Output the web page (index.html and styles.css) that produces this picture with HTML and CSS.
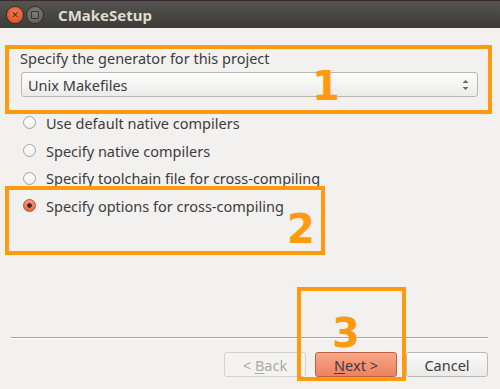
FILE: index.html
```html
<!DOCTYPE html>
<html lang="en">
<head>
  <meta charset="utf-8">
  <title>CMakeSetup</title>
  <link rel="stylesheet" href="styles.css">
</head>
<body>
  <div class="window">
    <header class="titlebar">
      <span class="btn-close">&#x2715;</span>
      <span class="btn-min"></span>
      <span class="title">CMakeSetup</span>
    </header>

    <main class="content">
      <label class="gen-label">Specify the generator for this project</label>
      <div class="combo">
        <span>Unix Makefiles</span>
        <span class="arrows">
          <svg width="7" height="12" viewBox="0 0 7 12"><path d="M0.5 4 L3.5 1 L6.5 4 Z M0.5 8 L3.5 11 L6.5 8 Z" fill="#6a6a6a"/></svg>
        </span>
      </div>

      <ul class="options">
        <li><span class="radio"></span>Use default native compilers</li>
        <li><span class="radio"></span>Specify native compilers</li>
        <li><span class="radio"></span>Specify toolchain file for cross-compiling</li>
        <li><span class="radio checked"></span>Specify options for cross-compiling</li>
      </ul>
    </main>

    <footer class="footer">
      <hr class="separator">
      <div class="buttons">
        <button class="btn" disabled>&lt; <u>B</u>ack</button>
        <button class="btn primary"><u>N</u>ext &gt;</button>
        <button class="btn">Cancel</button>
      </div>
    </footer>

    <!-- annotation overlays -->
    <div class="mark mark-1"><span class="num">1</span></div>
    <div class="mark mark-2"><span class="num">2</span></div>
    <div class="mark mark-3"><span class="num">3</span></div>
  </div>
</body>
</html>
```

FILE: styles.css
```css
body {
  margin: 0;
  padding: 0;
  font-family: "Noto Sans", "DejaVu Sans", sans-serif;
  font-size: 14.5px;
  color: #3c3c3c;
  background-color: #f2f1f0;
}

.window {
  position: relative;
  width: 500px;
  height: 389px;
  display: flex;
  flex-direction: column;
  overflow: hidden;
}

.titlebar {
  height: 28px;
  box-sizing: border-box;
  border-top: 1px solid #3a2835;
  background: linear-gradient(#55544f, #3c3b37);
  display: flex;
  align-items: center;
  padding-left: 7px;
}

.btn-close {
  width: 16px;
  height: 16px;
  border-radius: 50%;
  background: radial-gradient(circle at 50% 35%, #f37b4f, #d9481c);
  box-shadow: 0 0 0 1px #3a2c26;
  color: #3b2a22;
  font-size: 9px;
  font-weight: bold;
  line-height: 16px;
  text-align: center;
}

.btn-min {
  width: 16px;
  height: 16px;
  margin-left: 4px;
  border-radius: 50%;
  background: radial-gradient(circle at 50% 35%, #7d7c77, #5b5a55);
  box-shadow: 0 0 0 1px #2e2d2a;
  position: relative;
}

.btn-min::after {
  content: "";
  position: absolute;
  left: 4px;
  top: 4px;
  width: 6px;
  height: 6px;
  border: 1px solid #363532;
  border-radius: 1px;
}

.title {
  margin-left: 15px;
  font-weight: bold;
  font-size: 15px;
  color: #dfdbd2;
}

.content {
  flex: 1;
  padding: 21px 22px 0 20px;
}

.gen-label {
  display: block;
  line-height: 18px;
}

.combo {
  margin: 5px 0 0 1px;
  height: 25px;
  box-sizing: border-box;
  border: 1px solid #b9b7b3;
  border-radius: 3px;
  background: linear-gradient(#fdfdfd, #ecebea);
  display: flex;
  align-items: center;
  justify-content: space-between;
  padding: 0 8px 0 6px;
}

.arrows {
  display: flex;
}

.options {
  list-style: none;
  margin: 12px 0 0 3px;
  padding: 0;
}

.options li {
  display: flex;
  align-items: center;
  height: 27.7px;
}

.radio {
  width: 13px;
  height: 13px;
  box-sizing: border-box;
  border: 1px solid #a5a39f;
  border-radius: 50%;
  background: linear-gradient(#ffffff, #f0efee);
  margin-right: 10px;
}

.radio.checked {
  border-color: #b74d2c;
  background: radial-gradient(circle, #4a2a20 0 2px, transparent 2.6px),
              linear-gradient(#f59a78, #e5683f);
}

.footer {
  padding: 0 12px 12px 11px;
}

.separator {
  margin: 0;
  border: 0;
  border-top: 1px solid #a4a3a1;
  border-bottom: 1px solid #ffffff;
}

.buttons {
  display: flex;
  justify-content: flex-end;
  gap: 9px;
  margin-top: 13px;
}

.btn {
  width: 82px;
  height: 25px;
  font-family: inherit;
  font-size: 14.5px;
  color: #3c3c3c;
  border: 1px solid #bab8b4;
  border-radius: 3px;
  background: linear-gradient(#fafafa, #ebeae9);
  padding: 0;
}

.btn:disabled {
  color: #aaa9a6;
  border-color: #d4d2cf;
  background: #f4f3f2;
}

.btn.primary {
  border-color: #c2603f;
  background: linear-gradient(#f6a889, #ec8161);
}

.btn u {
  text-decoration-thickness: 1px;
  text-underline-offset: 2px;
}

.mark {
  position: absolute;
  box-sizing: border-box;
  border: 4px solid #ff9a0f;
}

.num {
  position: absolute;
  font-family: "DejaVu Sans", sans-serif;
  font-weight: bold;
  font-size: 40px;
  line-height: 1;
  color: #ff9a0f;
}

.mark-1 {
  left: 5px;
  top: 45px;
  width: 487px;
  height: 69px;
}

.mark-1 .num {
  left: 303px;
  top: 17px;
}

.mark-2 {
  left: 5px;
  top: 186px;
  width: 320px;
  height: 69px;
}

.mark-2 .num {
  left: 278px;
  top: 19px;
}

.mark-3 {
  left: 297px;
  top: 287px;
  width: 109px;
  height: 94px;
}

.mark-3 .num {
  left: 31px;
  top: 22px;
}
```
